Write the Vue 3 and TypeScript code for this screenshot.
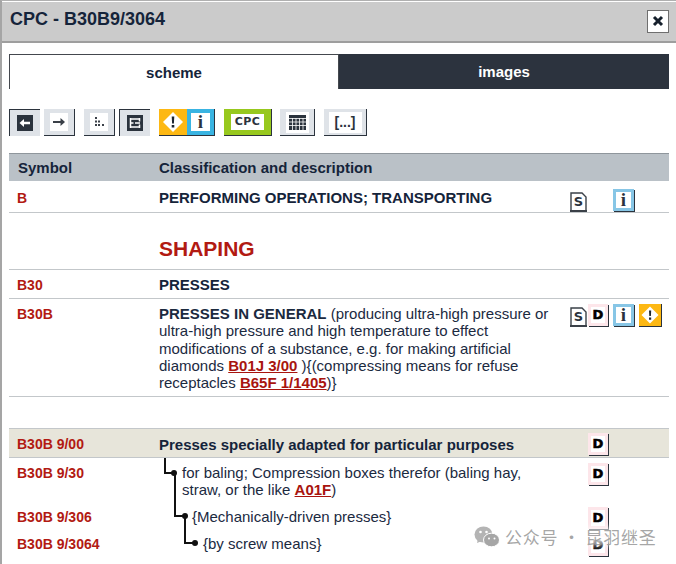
<script setup lang="ts">
</script>

<template>
  <div class="dialog">
    <header class="titlebar">
      <h1>CPC - B30B9/3064</h1>
      <button class="close" aria-label="close">
        <svg width="12" height="12" viewBox="0 0 12 12"><path d="M2 2 L10 10 M10 2 L2 10" stroke="#16202c" stroke-width="3" /></svg>
      </button>
    </header>
    <div class="body">
      <div class="tabs">
        <div class="tab active">scheme</div>
        <div class="tab">images</div>
      </div>
      <div class="toolbar">
        <div class="group">
          <span class="tool on"><span class="inner dark"><svg width="16" height="16" viewBox="0 0 16 16"><path d="M2.500 8 L7 4 V6.800 H13 V9.200 H7 V12 Z" fill="#fff" /></svg></span></span>
          <span class="tool"><span class="inner"><svg width="18" height="16" viewBox="0 0 18 16"><path d="M15 8 L10.500 4 V7 H3 V9 H10.500 V12 Z" fill="#3a4048" /></svg></span></span>
        </div>
        <div class="group">
          <span class="tool"><span class="inner"><svg width="16" height="16" viewBox="0 0 16 16"><path d="M4 3h2v2H4zM4 6.500h2v2H4zM7 6.500h2v2H7zM4 10h2v2H4zM7 10h2v2H7zM11 10h2v2h-2z" fill="#3a4048" /></svg></span></span>
          <span class="tool on"><span class="inner dark"><svg width="16" height="16" viewBox="0 0 16 16"><path d="M3.500 3v10M3.500 4h9M3.500 12h9M3.500 8h3M12.500 3v3.500M12.500 9.500V13M8 8h5" fill="none" stroke="#fff" stroke-width="1.500" /></svg></span></span>
        </div>
        <div class="pair">
          <span class="warn"><svg width="24" height="24" viewBox="0 0 24 24"><path d="M12 2 L22 12 L12 22 L2 12 Z" fill="#fff" /><path d="M10.700 6.500h2.600l-.4 7h-1.800zM10.700 15h2.600v2.500h-2.600z" fill="#1c2530" /></svg></span>
          <span class="info"><span class="i-box">i</span></span>
        </div>
        <span class="cpc"><span class="cpc-label">CPC</span></span>
        <span class="tool tbl"><span class="inner wide"><svg width="17" height="15" viewBox="0 0 17 15"><path d="M0 0h17v15H0z" fill="#2b333d" /><path d="M3.500 3v12M7 3v12M10.500 3v12M14 3v12M0 3.500h17M0 7h17M0 10.500h17" stroke="#fff" stroke-width=".8" /></svg></span></span>
        <span class="tool raised"><span class="inner ellipsis">[...]</span></span>
      </div>

      <div class="table-head">
        <span class="c-sym">Symbol</span>
        <span class="c-desc">Classification and description</span>
      </div>

      <div class="row r-b">
        <span class="c-sym code">B</span>
        <span class="c-desc caps">PERFORMING OPERATIONS; TRANSPORTING</span>
        <span class="c-ico first">
          <span class="doc"><svg width="17" height="20" viewBox="0 0 17 20"><path d="M1 1H12L16 5V19H1Z" fill="#fff" stroke="#3a4048" stroke-width="1.400" /><path d="M0 18H17V20H0Z" fill="#3a4048" /></svg><b>S</b></span>
          <span class="mini-i gap">i</span>
        </span>
      </div>
      <div class="row r-shaping">
        <span class="c-sym"></span>
        <span class="c-desc shaping">SHAPING</span>
      </div>
      <div class="row r-30">
        <span class="c-sym code">B30</span>
        <span class="c-desc caps">PRESSES</span>
      </div>
      <div class="row r-30b">
        <span class="c-sym code">B30B</span>
        <span class="c-desc text"><b>PRESSES IN GENERAL</b> (producing ultra-high pressure or ultra-high pressure and high temperature to effect modifications of a substance, e.g. for making artificial diamonds <a class="ref">B01J 3/00</a> ){(compressing means for refuse receptacles <a class="ref">B65F 1/1405</a>)}</span>
        <span class="c-ico first">
          <span class="doc"><svg width="17" height="20" viewBox="0 0 17 20"><path d="M1 1H12L16 5V19H1Z" fill="#fff" stroke="#3a4048" stroke-width="1.400" /><path d="M0 18H17V20H0Z" fill="#3a4048" /></svg><b>S</b></span><span class="mini-d">D</span><span class="mini-i">i</span><span class="mini-w"><svg width="20" height="20" viewBox="0 0 20 20"><path d="M10 1.500 L18.500 10 L10 18.500 L1.500 10 Z" fill="#fff" /><path d="M9 5.500h2.200l-.3 5.500H9.300zM9 12.500h2.200v2.200H9z" fill="#1c2530" /></svg></span>
        </span>
      </div>

      <div class="row r-900">
        <span class="c-sym code">B30B 9/00</span>
        <span class="c-desc lead">Presses specially adapted for particular purposes</span>
        <span class="c-ico second"><span class="mini-d">D</span></span>
      </div>
      <div class="plain r-930">
        <span class="c-sym code">B30B 9/30</span>
        <span class="c-desc text tree t1"><i class="stem s1"></i>for baling; Compression boxes therefor (baling hay, straw, or the like <a class="ref">A01F</a>)</span>
        <span class="c-ico second"><span class="mini-d">D</span></span>
      </div>
      <div class="plain r-9306">
        <span class="c-sym code">B30B 9/306</span>
        <span class="c-desc text tree t2"><i class="stem s2"></i>{Mechanically-driven presses}</span>
        <span class="c-ico second"><span class="mini-d">D</span></span>
      </div>
      <div class="plain r-93064">
        <span class="c-sym code">B30B 9/3064</span>
        <span class="c-desc text tree t3"><i class="stem s3"></i>{by screw means}</span>
        <span class="c-ico second"><span class="mini-d">D</span></span>
      </div>
    </div>

    <div class="watermark">
      <svg width="26" height="22" viewBox="0 0 26 22"><ellipse cx="9.500" cy="8.500" rx="9" ry="8" fill="#b4b4b4" /><path d="M4 13l-1 4 5-2z" fill="#b4b4b4" /><ellipse cx="17.500" cy="14" rx="8" ry="6.800" fill="#a6a6a6" stroke="#fff" stroke-width="1" /><circle cx="6.500" cy="6" r="1.300" fill="#fff" /><circle cx="12.500" cy="6" r="1.300" fill="#fff" /><circle cx="15" cy="12.500" r="1" fill="#fff" /><circle cx="20.500" cy="12.500" r="1" fill="#fff" /></svg>
      <span class="wm-text">公众号 · 昆羽继圣</span>
    </div>
  </div>
</template>

<style>
html, body { margin: 0; background: #fff; }
</style>

<style scoped>
.dialog {
  position: relative;
  width: 676px;
  height: 564px;
  overflow: hidden;
  box-sizing: border-box;
  border-top: 1px solid #b0b0b0;
  border-left: 2px solid #a5a5a5;
  background: #fff;
  font-family: "Liberation Sans", Arial, sans-serif;
  color: #15243a;
}
.titlebar {
  height: 41px;
  box-sizing: border-box;
  background: #cbcbcb;
  border-bottom: 2px solid #9e9e9e;
  display: flex;
  align-items: center;
  justify-content: space-between;
  padding: 0 7px 4px 8px;
  margin-top: 1px;
}
h1 { margin: 0; font-size: 18px; font-weight: 700; color: #15243a; }
.close {
  width: 22px; height: 23px; padding: 0; margin-top: 3px;
  background: #fff; border: 1px solid #6f6f6f;
  display: flex; align-items: center; justify-content: center;
}
.body { padding: 11px 7px 0 7px; }
.tabs { display: flex; height: 35px; width: 660px; }
.tab {
  flex: 1; box-sizing: border-box;
  display: flex; align-items: center; justify-content: center;
  font-size: 15px; font-weight: 700;
  background: #2c333e; color: #fff;
}
.tab.active {
  flex: 0 0 330px;
  background: #fff; color: #15243a;
  border: 1px solid #44484e; border-bottom: 0;
}
.toolbar { display: flex; margin-top: 20px; height: 27px; }
.group { display: flex; gap: 4px; margin-right: 9px; }
.tool {
  width: 31px; height: 27px; box-sizing: border-box;
  background: #dfe3e8; border-bottom: 1px solid #2b333d; border-right: 1px solid #2b333d;
  display: flex; align-items: center; justify-content: center;
}
.tool.on { border: 0; border-top: 1px solid #2b333d; border-left: 1px solid #2b333d; }
.inner { width: 18px; height: 18px; background: #fff; display: flex; align-items: center; justify-content: center; }
.inner.dark { width: 16px; height: 16px; background: #2b333d; }
.toolbar > .tool { margin-right: 9px; }
.tool.tbl { width: 35px; }
.inner.wide { width: 23px; height: 21px; }
.tool.raised { width: 43px; }
.inner.ellipsis { width: 33px; height: 21px; font-size: 14px; font-weight: 700; color: #2b333d; }
.pair { display: flex; height: 27px; margin-right: 9px; border-bottom: 1px solid #2b333d; box-sizing: border-box; }
.warn { width: 28px; background: #fdb813; display: flex; align-items: center; justify-content: center; }
.info { width: 28px; background: #39b4e2; display: flex; align-items: center; justify-content: center; border-right: 1px solid #2b333d; box-sizing: border-box; }
.i-box { width: 19px; height: 18px; background: #fff; color: #2b333d; font: 700 19px/18px "Liberation Serif", serif; text-align: center; }
.cpc { width: 48px; height: 27px; box-sizing: border-box; background: #97c81e; border-bottom: 1px solid #2b333d; border-right: 1px solid #2b333d; margin-right: 8px; display: flex; align-items: center; justify-content: center; }
.cpc-label { width: 33px; height: 16px; background: #fff; font: 700 11px/16px "DejaVu Sans", sans-serif; letter-spacing: .4px; text-align: center; color: #2b333d; }
.table-head {
  margin-top: 17px; height: 28px; box-sizing: border-box; background: #bac1c7;
  border-top: 1px solid #8f969c;
  display: flex; align-items: center;
  font-size: 15px; font-weight: 700;
  color: #15243a;
}
.c-sym { width: 150px; flex: none; box-sizing: border-box; padding-left: 8px; }
.c-desc { width: 403px; flex: none; box-sizing: border-box; padding-left: 0; }
.table-head .c-sym { padding-left: 9px; }
.row { display: flex; border-bottom: 1px solid #c3c7ca; box-sizing: border-box; position: relative; }
.code { color: #b21a12; font-size: 14px; font-weight: 700; line-height: 17px; }
.caps { font-size: 15px; font-weight: 700; line-height: 17px; margin-top: -1px; }
.c-ico { display: flex; align-items: flex-start; }
.r-b { height: 32px; padding-top: 9px; }
.r-shaping { height: 57px; padding-top: 24px; }
.shaping { font-size: 21px; font-weight: 700; color: #b21a12; }
.r-30 { height: 29px; padding-top: 7px; }
.r-30b { height: 98px; padding-top: 7px; margin-bottom: 31px; }
.text { font-size: 15px; line-height: 17.25px; color: #1b2a3f; margin-top: -1px; }
.ref { color: #a8140e; font-weight: 700; text-decoration: underline; }
.r-b .c-ico { margin-top: -1px; margin-left: 8px; }
.r-30b .c-ico { margin-top: -2px; margin-left: 8px; }
.doc { position: relative; width: 18px; height: 20px; margin-top: 3px; flex: none; }
.doc svg { position: absolute; left: 0; top: 0; }
.doc b {
  position: absolute; left: 0; top: 0; width: 17px; text-align: center;
  font: 700 13px/19px "DejaVu Sans", sans-serif; color: #2b333d;
}
.mini-d {
  width: 20px; height: 22px; box-sizing: border-box; background: #fff;
  border: 3px solid #fde6ea;
  box-shadow: 1px 1px 0 #2b333d;
  font: 700 13px/16px "DejaVu Sans", sans-serif; text-align: center; color: #000;
  -webkit-text-stroke: .6px #000;
}
.mini-i {
  width: 21px; height: 22px; box-sizing: border-box; background: #fff;
  border: 3px solid #87c6e6;
  box-shadow: 1px 1px 0 #2b333d;
  font: 700 19px/16px "Liberation Serif", serif; text-align: center; color: #2b333d;
  margin-left: 5px;
}
.r-b .mini-i.gap { margin-left: 25px; }
.mini-w {
  width: 23px; height: 23px; box-sizing: border-box; background: #fdb813;
  border-right: 1px solid #2b333d; border-bottom: 1px solid #2b333d;
  display: flex; align-items: center; justify-content: center;
  margin-left: 5px;
}
.r-900 { height: 30px; background: #e7e5da; border-top: 1px solid #c3c7ca; align-items: flex-start; padding-top: 7px; }
.lead { font-size: 15px; font-weight: 700; line-height: 17px; }
.second { margin-left: 26px; }
.r-900 .second { margin-top: -3px; }
.plain { display: flex; position: relative; }
.r-930 { height: 51px; padding-top: 7px; box-sizing: border-box; }
.r-930 .second, .r-9306 .second, .r-93064 .second { margin-top: -2px; }
.r-9306 { height: 27px; box-sizing: border-box; }
.r-93064 { height: 26px; }
.tree { position: relative; }
.t1 { padding-left: 23px; }
.t2 { padding-left: 33px; }
.t3 { padding-left: 44px; }
.stem {
  position: absolute; display: block; box-sizing: border-box;
  border-left: 2px solid #111; border-bottom: 2px solid #111;
}
.stem::after {
  content: ""; position: absolute; right: -4px; bottom: -4px;
  width: 6px; height: 6px; border-radius: 50%; background: #111;
}
.s1 { left: 5px; top: -6px; width: 9px; height: 16px; }
.s2 { left: 15px; top: -35px; width: 10px; height: 44px; }
.s3 { left: 25px; top: -19px; width: 10px; height: 28px; }
.watermark {
  position: absolute; left: 472px; top: 525px;
  display: flex; align-items: center; gap: 5px;
  font: 400 17px/22px "Noto Sans CJK SC", sans-serif; letter-spacing: .8px;
  color: rgba(150,150,150,.85);
}
.watermark::before {
  content: ""; position: absolute; left: 108px; top: 2px; width: 60px; height: 17px;
  background: rgba(255,255,255,.8); filter: blur(3px);
}
.wm-text { position: relative; }
</style>
